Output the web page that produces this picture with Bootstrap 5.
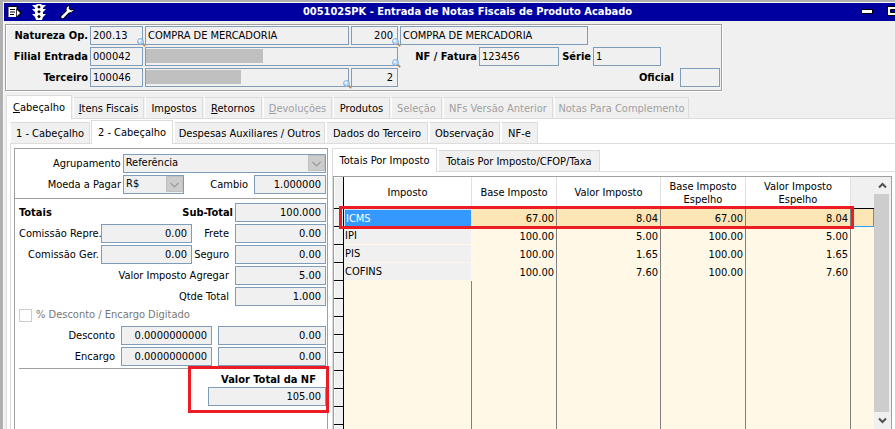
<!DOCTYPE html>
<html lang="pt-BR">
<head>
<meta charset="utf-8">
<meta name="viewport" content="width=device-width, initial-scale=1">
<title>005102SPK - Entrada de Notas Fiscais de Produto Acabado</title>
<link href="https://cdn.jsdelivr.net/npm/bootstrap@5.3.0/dist/css/bootstrap.min.css" rel="stylesheet">
<style>
body{font:11px/14px "DejaVu Sans Condensed",Tahoma,"Noto Sans",sans-serif;color:#000;background:#f0f0f0}
.app{height:100vh;border-left:3px solid #b0b0b0;border-top:2px solid #b0b0b0;box-shadow:inset 1px 1px #f8f8f8;padding:1px 0 0 1px}
.titlebar{background:#0000a0;color:#fff;height:18px}
.titlebar h1{font-size:11px;line-height:18px;padding-left:36px}
.tool{background:none;border:0;padding:0;height:16px;display:block}
.tool svg{display:block}
.tool-b{margin-left:10px}
.tool-max{margin-left:14px}
.head{width:717px;margin:3px 0 0 1px;padding:1px 1px 3px 0;border:1px solid #a0a0a0;box-shadow:1px 1px #fff,inset 1px 1px #fff}
.rows{display:flex;flex-direction:column;gap:2px}
.line{display:flex;gap:2px;align-items:center}
.line label{text-align:right;white-space:nowrap}
.fld{height:19px;border:1px solid #7f9db9;background:#f0f0f0;border-radius:0;padding:0 5px 1px 2px;font-size:11px;line-height:14px;color:#000;min-width:0}
.num{text-align:right;padding-right:4px}
.fldbox{position:relative;display:flex}
.fldbox .fld{width:100%}
.fldbox .lens{position:absolute;right:-3px;bottom:-2px}
.fldbox .veil{position:absolute;left:1px;top:2px;width:117px;height:14px;background:#c0c0c0}
.fldbox .veil-b{width:95px}
.w-cap{width:82px}.w-code{width:53px}.w-name{width:204px}.w-qty{width:47px}.w-desc{width:188px}.w-wide{width:253px}
.w-nf{width:77px}.w-nfv{width:80px}.w-serie{width:30px}.w-seriev{width:68px}.w-of{width:40px}
.tabs{border:0;gap:1px;align-items:flex-end;flex-wrap:nowrap;position:relative;z-index:1}
.tabs .nav-link{border:1px solid #dcdcdc;border-bottom:0;border-left-color:#fff;border-radius:0;background:#f0f0f0;color:#000;padding:0;height:21px;line-height:21px;font-size:11px;white-space:nowrap;text-align:center;margin:0}
.tabs .nav-link.active{background:#fff;border-color:#dcdcdc;height:24px;line-height:21px;margin-bottom:-1px}
.tabs .nav-link:disabled{color:#a0a0a0;border-color:#dcdcdc #dcdcdc #dcdcdc #fff}
.main-tabs{padding-top:4px;margin-left:2px}
.sub-tabs{padding-top:1px}
.t37{width:37px}.t51{width:51px}.t57{width:57px}.t58{width:58px}.t66{width:66px}.t69{width:69px}.t71{width:71px}.t80{width:80px}
.t82{width:82px}.t102{width:102px}.t105{width:105px}.t110{width:110px}.t135{width:135px}.t151{width:151px}.t162{width:162px}
.sheet{background:#fff;border:1px solid #dcdcdc;border-width:1px 0 0 1px;min-height:0;min-width:0}
.main-sheet{margin-left:2px;padding-left:3px}
.sub-sheet{padding:4px 0 0 3px;gap:4px}
.form{width:314px;flex:none;border:1px solid #a0a0a0;border-bottom:0}
.top-box{border-bottom:1px solid #a0a0a0;padding:5px 1px 4px}
.totals{padding:4px 1px 0 4px}
.w-l1{width:105px}.w-group{width:204px}.w-cur{width:61px}.w-rate{width:72px}.w-m{width:91px}.w-l2{width:80px}.w-amt{width:108px}
.pick{position:relative;display:flex}
.pick select{appearance:none;width:100%;opacity:1}
.pick svg{position:absolute;right:1px;top:1px;pointer-events:none}
.tick{appearance:none;width:13px;height:13px;border:1px solid #ccc;background:#fff;margin:0}
.muted{color:#787878}
.gap-top{padding-top:2px}
.mark-red{border:3px solid #ed1c24}
.cut{border-top:1px solid #a0a0a0}
.sum{width:141px;margin:-3px -3px 0 auto;position:relative;padding:4px 0}
.sum label{display:block;text-align:center;padding-left:20px}
.sum .fld{display:block;width:118px;margin-left:auto}
.gridbox{margin:4px 3px 0 0;border:1px solid #a0a0a0;border-bottom:0;background:#fff8e7;min-height:0}
.right-side{min-width:0}
.taxes{table-layout:fixed;width:100%;border-collapse:separate;border-spacing:0}
.taxes th,.taxes td{padding:0 2px;height:18px;line-height:17px;border-right:1px solid #808080;white-space:nowrap;background:#fff8e7;overflow:hidden}
.taxes td{text-align:right}
.taxes thead th{height:32px;line-height:13px;font-weight:400;text-align:center;background:#fff;border-right-color:#e0e0e0;border-bottom:1px solid #000;white-space:normal;vertical-align:middle}
.taxes thead th:last-child{background:#f0f0f0;border-right:0}
.taxes td:last-child{border-right:0}
.taxes .ind{background:#f0f0f0!important;border-right:1px solid #000!important;border-bottom:1px solid #000;box-shadow:inset 1px 1px #fff;padding:0}
.taxes tbody th{font-weight:400;text-align:left;padding-left:1px}
.taxes tbody th.ro{background:#f0f0f0;border-right-color:#fff8e7;border-bottom:1px solid #fff8e7}
.taxes .cur td{background:#fde6b5}
.taxes .cur th{background:#39f;color:#fff;border:1px solid #cfe5fb;line-height:15px}
.taxes .cur td:last-child{border-right:1px solid #39f;border-bottom:1px solid #39f}
.c-ind{width:10px}.c-tax{width:128px}.c-base{width:85px}.c-val{width:104px}.c-esp{width:105px}.c-end{width:23px}
.row-mark{position:absolute;left:5px;right:20px;top:29px;height:23px}
.scroll{width:17px;flex:none;background:#f0f0f0}
.scroll button{border:0;padding:0;width:16px;height:17px;background:#f0f0f0;display:block}
.scroll button svg{display:block;margin:auto}
.thumb{background:#cdcdcd;width:15px}
</style>
<script src="https://cdn.jsdelivr.net/npm/bootstrap@5.3.0/dist/js/bootstrap.bundle.min.js"></script>
</head>
<body>
<svg width="0" height="0" class="position-absolute" aria-hidden="true">
<symbol id="lens" viewBox="0 0 9 9"><path d="M5.5 5.5l2.7 2.7" stroke="#b58a55" stroke-width="1.8"/><circle cx="3.5" cy="3.5" r="2.9" fill="#b8dafa" stroke="#7fa8dc"/><circle cx="2.8" cy="2.6" r="1.2" fill="#fff"/></symbol>
<symbol id="drop" viewBox="0 0 17 17"><path d="M.5.5h16v15H.5z" fill="#ccc" stroke="#bfbfbf"/><path d="M4.500 7l4 4 4-4" fill="none" stroke="#9a9a9a" stroke-width="1.200"/></symbol>
</svg>
<div class="app d-flex flex-column overflow-hidden">
<header class="titlebar d-flex align-items-center flex-shrink-0 position-relative">
  <button class="tool ms-1" aria-label="Menu"><svg width="14" height="16" viewBox="0 0 14 16"><path d="M0 2h10v3l4 4-4 4H0z" fill="#000"/><path d="M.5 3h8v10h-8z" fill="#fff"/><path d="M2 5.500h5M2 8h5M2 10.500h4" stroke="#000" stroke-width="1.200"/><path d="M8.500 5l4 4-4 4z" fill="#fff" stroke="#000" stroke-width=".7"/></svg></button>
  <button class="tool tool-b" aria-label="Status"><svg width="14" height="16" viewBox="0 0 14 16"><path d="M0 1h4l1-1h4l1 1h4l-3 3v1h3l-3 3v2h3l-3 3-1 3H4l-1-3-3-3h3V8L0 5h3V4z" fill="#fff"/><path d="M7 1.200l1.800 1.800L7 4.800 5.200 3zM7 6l1.800 1.800L7 9.600 5.200 7.800zM7 10.800l1.800 1.800L7 14.400l-1.800-1.800z" fill="#000"/></svg></button>
  <button class="tool tool-max" aria-label="Ferramentas"><svg width="15" height="16" viewBox="0 0 15 16"><path d="M2.500 13L8 7.500" stroke="#000" stroke-width="4.500" stroke-linecap="round"/><path d="M10 1.500C6.500 2 5.500 4.500 6.500 7.500c2 2.500 6.500 1.500 7.500-2.500L11 6 9 4.500z" fill="#fff" stroke="#000"/><path d="M2.500 13l5.700-5.700" stroke="#fff" stroke-width="2.500" stroke-linecap="round"/></svg></button>
  <h1 class="m-0 fw-bold position-absolute start-0 end-0 text-center pe-none">005102SPK - Entrada de Notas Fiscais de Produto Acabado</h1>
  <button class="tool ms-auto" aria-label="Minimizar"><svg width="12" height="16" viewBox="0 0 12 16"><path d="M.5 5.500h11v4H.5z" fill="#fff" stroke="#000"/></svg></button>
  <button class="tool tool-max overflow-hidden" aria-label="Maximizar"><svg width="8" height="16" viewBox="0 0 8 16"><path d="M.5 2.500h12v9H.5z" fill="#fff" stroke="#000"/><path d="M3.500 5.500h8v3h-8z" fill="#0000a0" stroke="#000"/></svg></button>
</header>

<section class="head rows flex-shrink-0">
  <div class="line">
    <label class="w-cap fw-bold" for="nat">Natureza Op.</label>
    <div class="fldbox w-code"><input class="fld" id="nat" value="200.13" readonly><svg class="lens" width="9" height="9"><use href="#lens"/></svg></div>
    <input class="fld w-name" aria-label="Descrição da natureza" value="COMPRA DE MERCADORIA" readonly>
    <div class="fldbox w-qty"><input class="fld num" aria-label="Código" value="200" readonly><svg class="lens" width="9" height="9"><use href="#lens"/></svg></div>
    <input class="fld w-desc" aria-label="Descrição do código" value="COMPRA DE MERCADORIA" readonly>
  </div>
  <div class="line">
    <label class="w-cap fw-bold" for="fil">Filial Entrada</label>
    <input class="fld w-code" id="fil" value="000042" readonly>
    <div class="fldbox w-wide"><input class="fld" aria-label="Nome da filial" readonly><span class="veil"></span><svg class="lens" width="9" height="9"><use href="#lens"/></svg></div>
    <label class="w-nf fw-bold" for="nf">NF / Fatura</label>
    <input class="fld w-nfv" id="nf" value="123456" readonly>
    <label class="w-serie fw-bold" for="ser">Série</label>
    <input class="fld w-seriev" id="ser" value="1" readonly>
  </div>
  <div class="line">
    <label class="w-cap fw-bold" for="ter">Terceiro</label>
    <input class="fld w-code" id="ter" value="100046" readonly>
    <div class="fldbox w-name"><input class="fld" aria-label="Nome do terceiro" readonly><span class="veil veil-b"></span><svg class="lens" width="9" height="9"><use href="#lens"/></svg></div>
    <input class="fld num w-qty" aria-label="Tipo" value="2" readonly>
    <label class="fw-bold ms-auto me-1" for="ofi">Oficial</label>
    <input class="fld w-of" id="ofi" readonly>
  </div>
</section>

<nav class="nav nav-tabs tabs main-tabs flex-shrink-0">
  <button class="nav-link active t66"><u>C</u>abeçalho</button>
  <button class="nav-link t71"><u>I</u>tens Fiscais</button>
  <button class="nav-link t58">Im<u>p</u>ostos</button>
  <button class="nav-link t58"><u>R</u>etornos</button>
  <button class="nav-link t69" disabled><u>D</u>evoluções</button>
  <button class="nav-link t57">Produtos</button>
  <button class="nav-link t51" disabled>Seleção</button>
  <button class="nav-link t110" disabled>NFs Versão Anterior</button>
  <button class="nav-link t135" disabled>Notas Para Complemento</button>
</nav>
<main class="sheet main-sheet flex-grow-1 d-flex flex-column">
  <nav class="nav nav-tabs tabs sub-tabs flex-shrink-0">
    <button class="nav-link t80">1 - Cabeçalho</button>
    <button class="nav-link active t82">2 - Cabeçalho</button>
    <button class="nav-link t151">Despesas Auxiliares / Outros</button>
    <button class="nav-link t102">Dados do Terceiro</button>
    <button class="nav-link t71">Observação</button>
    <button class="nav-link t37">NF-e</button>
  </nav>
  <div class="sheet sub-sheet flex-grow-1 d-flex">
    <section class="form">
      <div class="top-box rows">
        <div class="line"><label class="w-l1" for="agr">Agrupamento</label>
          <div class="pick w-group"><select class="fld" id="agr" disabled><option>Referência</option></select><svg width="17" height="17"><use href="#drop"/></svg></div></div>
        <div class="line"><label class="w-l1" for="moe">Moeda a Pagar</label>
          <div class="pick w-cur"><select class="fld" id="moe" disabled><option>R$</option></select><svg width="17" height="17"><use href="#drop"/></svg></div>
          <label class="ms-auto me-1" for="cam">Cambio</label><input class="fld num w-rate" id="cam" value="1.000000" readonly></div>
      </div>
      <div class="totals rows">
        <div class="line"><b>Totais</b><label class="fw-bold ms-auto" for="sub">Sub-Total</label><input class="fld num w-m" id="sub" value="100.000" readonly></div>
        <div class="line"><label class="w-l2" for="cr">Comissão Repre.</label><input class="fld num w-m" id="cr" value="0.00" readonly><label class="ms-auto me-1" for="fr">Frete</label><input class="fld num w-m" id="fr" value="0.00" readonly></div>
        <div class="line"><label class="w-l2" for="cg">Comissão Ger.</label><input class="fld num w-m" id="cg" value="0.00" readonly><label class="ms-auto me-1" for="sg">Seguro</label><input class="fld num w-m" id="sg" value="0.00" readonly></div>
        <div class="line"><label class="ms-auto me-1" for="via">Valor Imposto Agregar</label><input class="fld num w-m" id="via" value="5.00" readonly></div>
        <div class="line"><label class="ms-auto me-1" for="qt">Qtde Total</label><input class="fld num w-m" id="qt" value="1.000" readonly></div>
        <div class="line muted gap-1"><input type="checkbox" class="tick" id="pc" disabled><label for="pc">% Desconto / Encargo Digitado</label></div>
        <div class="line gap-top"><label class="ms-auto me-1" for="d1">Desconto</label><input class="fld num w-m me-1" id="d1" value="0.0000000000" readonly><input class="fld num w-amt" aria-label="Valor do desconto" value="0.00" readonly></div>
        <div class="line"><label class="ms-auto me-1" for="e1">Encargo</label><input class="fld num w-m me-1" id="e1" value="0.0000000000" readonly><input class="fld num w-amt" aria-label="Valor do encargo" value="0.00" readonly></div>
        <div class="cut"><div class="sum mark-red"><label class="fw-bold" for="tot">Valor Total da NF</label><input class="fld num" id="tot" value="105.00" readonly></div></div>
      </div>
    </section>
    <section class="right-side flex-grow-1 d-flex flex-column">
      <nav class="nav nav-tabs tabs flex-shrink-0">
        <button class="nav-link active t105">Totais Por Imposto</button>
        <button class="nav-link t162">Totais Por Imposto/CFOP/Taxa</button>
      </nav>
      <div class="sheet flex-grow-1 d-flex flex-column">
      <div class="gridbox flex-grow-1 d-flex overflow-hidden">
        <div class="flex-grow-1 position-relative">
        <table class="taxes">
          <colgroup><col class="c-ind"><col class="c-tax"><col class="c-base"><col class="c-val"><col class="c-base"><col class="c-esp"><col class="c-end"></colgroup>
          <thead><tr><th class="ind"></th><th>Imposto</th><th>Base Imposto</th><th>Valor Imposto</th><th>Base Imposto<br>Espelho</th><th>Valor Imposto<br>Espelho</th><th></th></tr></thead>
          <tbody>
            <tr class="cur"><td class="ind"></td><th>ICMS</th><td>67.00</td><td>8.04</td><td>67.00</td><td>8.04</td><td></td></tr>
            <tr><td class="ind"></td><th class="ro">IPI</th><td>100.00</td><td>5.00</td><td>100.00</td><td>5.00</td><td></td></tr>
            <tr><td class="ind"></td><th class="ro">PIS</th><td>100.00</td><td>1.65</td><td>100.00</td><td>1.65</td><td></td></tr>
            <tr><td class="ind"></td><th class="ro">COFINS</th><td>100.00</td><td>7.60</td><td>100.00</td><td>7.60</td><td></td></tr>
            <tr><td class="ind"></td><td></td><td></td><td></td><td></td><td></td><td></td></tr>
            <tr><td class="ind"></td><td></td><td></td><td></td><td></td><td></td><td></td></tr>
            <tr><td class="ind"></td><td></td><td></td><td></td><td></td><td></td><td></td></tr>
            <tr><td class="ind"></td><td></td><td></td><td></td><td></td><td></td><td></td></tr>
            <tr><td class="ind"></td><td></td><td></td><td></td><td></td><td></td><td></td></tr>
            <tr><td class="ind"></td><td></td><td></td><td></td><td></td><td></td><td></td></tr>
            <tr><td class="ind"></td><td></td><td></td><td></td><td></td><td></td><td></td></tr>
            <tr><td class="ind"></td><td></td><td></td><td></td><td></td><td></td><td></td></tr>
            <tr><td class="ind"></td><td></td><td></td><td></td><td></td><td></td><td></td></tr>
          </tbody>
        </table>
        <div class="row-mark mark-red"></div>
        </div>
        <div class="scroll d-flex flex-column">
          <button aria-label="Subir"><svg width="9" height="7" viewBox="0 0 9 7"><path d="M1 5.500L4.500 2 8 5.500" fill="none" stroke="#505050" stroke-width="2"/></svg></button>
          <div class="thumb flex-grow-1"></div>
          <button aria-label="Descer"><svg width="9" height="7" viewBox="0 0 9 7"><path d="M1 1.500L4.500 5 8 1.500" fill="none" stroke="#505050" stroke-width="2"/></svg></button>
        </div>
      </div>
      </div>
    </section>
  </div>
</main>
</div>
</body>
</html>
